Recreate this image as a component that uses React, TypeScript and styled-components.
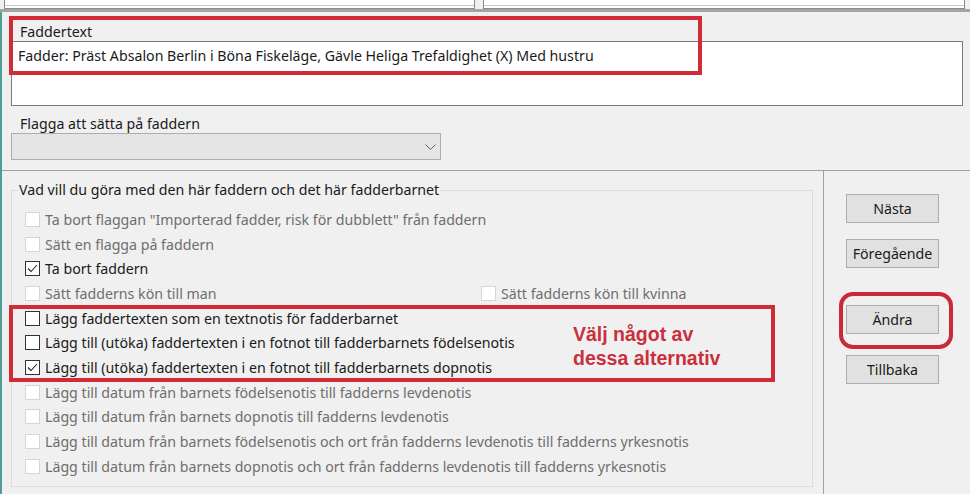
import React from 'react'
import styled, { createGlobalStyle } from 'styled-components'

const GlobalStyle = createGlobalStyle`
  html, body {
    margin: 0;
    padding: 0;
    background: #f0f0f0;
  }
  body {
    width: 970px;
    height: 494px;
    overflow: hidden;
    font-family: "Noto Sans", "Open Sans", sans-serif;
    font-size: 14.2px;
    color: #1a1a1a;
  }
`

type Option = { label: string; checked?: boolean; enabled?: boolean; pair?: string }

const options: Option[] = [
  { label: 'Ta bort flaggan "Importerad fadder, risk för dubblett" från faddern' },
  { label: 'Sätt en flagga på faddern' },
  { label: 'Ta bort faddern', checked: true, enabled: true },
  { label: 'Sätt fadderns kön till man', pair: 'Sätt fadderns kön till kvinna' },
  { label: 'Lägg faddertexten som en textnotis för fadderbarnet', enabled: true },
  { label: 'Lägg till (utöka) faddertexten i en fotnot till fadderbarnets födelsenotis', enabled: true },
  { label: 'Lägg till (utöka) faddertexten i en fotnot till fadderbarnets dopnotis', checked: true, enabled: true },
  { label: 'Lägg till datum från barnets födelsenotis till fadderns levdenotis' },
  { label: 'Lägg till datum från barnets dopnotis till fadderns levdenotis' },
  { label: 'Lägg till datum från barnets födelsenotis och ort från fadderns levdenotis till fadderns yrkesnotis' },
  { label: 'Lägg till datum från barnets dopnotis och ort från fadderns levdenotis till fadderns yrkesnotis' },
]

const CheckBox = ({ label, checked, enabled }: Option) => (
  <CheckItem $enabled={!!enabled}>
    <Box $enabled={!!enabled}>
      {checked && (
        <svg width='11' height='9' viewBox='0 0 11 9'>
          <polyline points='1,4.5 4,7.5 10,1' fill='none' stroke='#222' strokeWidth='1.1' />
        </svg>
      )}
    </Box>
    {label}
  </CheckItem>
)

export default function App() {
  return (
    <>
      <GlobalStyle />
      <TopStrip>
        <TopField $width={471} />
        <TopField />
      </TopStrip>
      <Main>
        <TextSection>
          <FieldLabel>Faddertext</FieldLabel>
          <TextArea>Fadder: Präst Absalon Berlin i Böna Fiskeläge, Gävle Heliga Trefaldighet (X) Med hustru</TextArea>
          <MarkBox $left={7} $top={4} $width={693} $height={59} />
          <FieldLabel>Flagga att sätta på faddern</FieldLabel>
          <Select>
            <svg width='11' height='6' viewBox='0 0 11 6'>
              <polyline points='0.5,0.5 5.5,5.5 10.5,0.5' fill='none' stroke='#606060' strokeWidth='1' />
            </svg>
          </Select>
        </TextSection>
        <Bottom>
          <Left>
            <Group>
              <Legend>Vad vill du göra med den här faddern och det här fadderbarnet</Legend>
              {options.map(o => (
                <Row key={o.label}>
                  {o.pair ? (
                    <>
                      <PairCell>
                        <CheckBox {...o} />
                      </PairCell>
                      <CheckBox label={o.pair} />
                    </>
                  ) : (
                    <CheckBox {...o} />
                  )}
                </Row>
              ))}
            </Group>
            <MarkBox $left={7} $top={134} $width={766} $height={77}>
              <Hint>
                Välj något av
                <br />
                dessa alternativ
              </Hint>
            </MarkBox>
          </Left>
          <Buttons>
            <Button $gap={0}>Nästa</Button>
            <Button $gap={16}>Föregående</Button>
            <Button $gap={37}>Ändra</Button>
            <Button $gap={21}>Tillbaka</Button>
            <RoundMark />
          </Buttons>
        </Bottom>
      </Main>
    </>
  )
}

const TopStrip = styled.div`
  display: flex;
  gap: 8px;
  height: 9px;
  padding: 0 5px 0 4px;
  border-bottom: 3px solid #a4a4a4;
`
const TopField = styled.div<{ $width?: number }>`
  flex: ${p => (p.$width ? `0 0 ${p.$width}px` : '1')};
  box-sizing: border-box;
  background: #fff;
  border: 1px solid #8a8a8a;
  border-top: none;
  box-shadow: inset 0 -2px 0 #fff, inset 0 -3px 0 #c8c8c8;
`
const Main = styled.div`
  border-left: 2px solid #4f9e95;
  height: 482px;
  box-sizing: border-box;
  display: flex;
  flex-direction: column;
`
const TextSection = styled.div`
  position: relative;
  padding: 11px 7px 10px 9px;
  display: flex;
  flex-direction: column;
  align-items: flex-start;
`
const FieldLabel = styled.div`
  margin-left: 9px;
  line-height: 18px;
  color: #1a1a1a;
`
const TextArea = styled.div`
  box-sizing: border-box;
  align-self: stretch;
  height: 65px;
  margin-bottom: 9px;
  padding: 4px 6px;
  background: #fff;
  border: 1px solid #7a7a7a;
  line-height: 20px;
  color: #1a1a1a;
`
const Select = styled.div`
  box-sizing: border-box;
  width: 430px;
  height: 27px;
  background: #e5e5e5;
  border: 1px solid #adadad;
  display: flex;
  align-items: center;
  justify-content: flex-end;
  padding-right: 4px;
`
const MarkBox = styled.div<{ $left: number; $top: number; $width: number; $height: number }>`
  position: absolute;
  left: ${p => p.$left}px;
  top: ${p => p.$top}px;
  width: ${p => p.$width}px;
  height: ${p => p.$height}px;
  box-sizing: border-box;
  border: 4px solid #d12b36;
  pointer-events: none;
`
const Hint = styled.div`
  margin: 13px 0 0 560px;
  font-family: "Liberation Sans", Arial, sans-serif;
  font-weight: bold;
  font-size: 19.5px;
  line-height: 24px;
  color: #c9303c;
`
const Bottom = styled.div`
  flex: 1;
  display: flex;
  border-top: 1px solid #a0a0a0;
`
const Left = styled.div`
  position: relative;
  width: 821px;
  padding: 10px 0 0 9px;
  box-sizing: border-box;
`
const Group = styled.fieldset`
  margin: 0;
  width: 802px;
  height: 306px;
  box-sizing: border-box;
  padding: 8px 0 0 6px;
  border: 1px solid #dcdcdc;
`
const Legend = styled.legend`
  padding: 0 1px;
  line-height: 18px;
  color: #1a1a1a;
`
const Row = styled.div`
  display: flex;
  align-items: center;
  height: 24.7px;
  padding-left: 7px;
`
const PairCell = styled.div`
  width: 456px;
`
const CheckItem = styled.div<{ $enabled: boolean }>`
  display: flex;
  align-items: center;
  gap: 5px;
  white-space: nowrap;
  color: ${p => (p.$enabled ? '#1a1a1a' : '#6e6e6e')};
`
const Box = styled.span<{ $enabled: boolean }>`
  width: 15px;
  height: 15px;
  box-sizing: border-box;
  background: #fff;
  border: 1px solid ${p => (p.$enabled ? '#333' : '#d6d6d6')};
  display: flex;
  align-items: center;
  justify-content: center;
`
const Buttons = styled.div`
  position: relative;
  flex: 1;
  border-left: 1px solid #a0a0a0;
  padding: 23px 0 0 22px;
  display: flex;
  flex-direction: column;
  align-items: flex-start;
`
const Button = styled.button<{ $gap: number }>`
  margin-top: ${p => p.$gap}px;
  width: 93px;
  height: 29px;
  background: #e1e1e1;
  border: 1px solid #adadad;
  font-family: inherit;
  font-size: 14.2px;
  color: #1a1a1a;
  padding: 0;
`
const RoundMark = styled.div`
  position: absolute;
  left: 15px;
  top: 121px;
  width: 114px;
  height: 57px;
  box-sizing: border-box;
  border: 4px solid #c92a36;
  border-radius: 14px;
  pointer-events: none;
`
